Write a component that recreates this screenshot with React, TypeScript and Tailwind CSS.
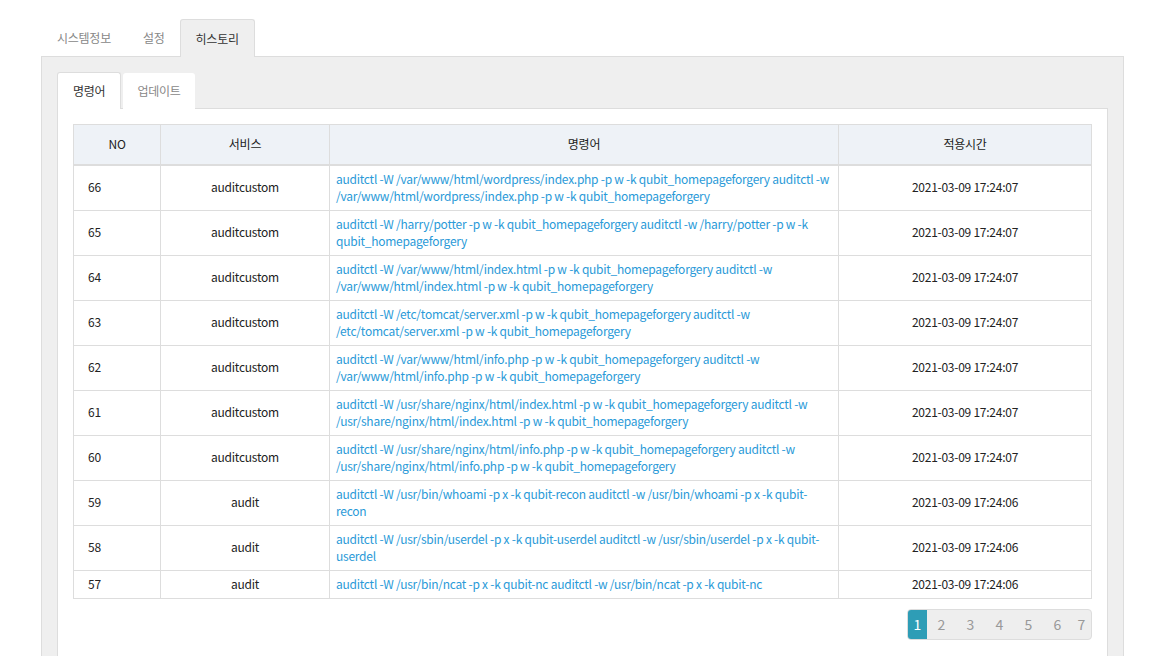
import React from 'react';

interface HistoryRow {
  no: number;
  service: string;
  command: string;
  time: string;
}

const rows: HistoryRow[] = [
  { no: 66, service: 'auditcustom', command: 'auditctl -W /var/www/html/wordpress/index.php -p w -k qubit_homepageforgery auditctl -w /var/www/html/wordpress/index.php -p w -k qubit_homepageforgery', time: '2021-03-09 17:24:07' },
  { no: 65, service: 'auditcustom', command: 'auditctl -W /harry/potter -p w -k qubit_homepageforgery auditctl -w /harry/potter -p w -k qubit_homepageforgery', time: '2021-03-09 17:24:07' },
  { no: 64, service: 'auditcustom', command: 'auditctl -W /var/www/html/index.html -p w -k qubit_homepageforgery auditctl -w /var/www/html/index.html -p w -k qubit_homepageforgery', time: '2021-03-09 17:24:07' },
  { no: 63, service: 'auditcustom', command: 'auditctl -W /etc/tomcat/server.xml -p w -k qubit_homepageforgery auditctl -w /etc/tomcat/server.xml -p w -k qubit_homepageforgery', time: '2021-03-09 17:24:07' },
  { no: 62, service: 'auditcustom', command: 'auditctl -W /var/www/html/info.php -p w -k qubit_homepageforgery auditctl -w /var/www/html/info.php -p w -k qubit_homepageforgery', time: '2021-03-09 17:24:07' },
  { no: 61, service: 'auditcustom', command: 'auditctl -W /usr/share/nginx/html/index.html -p w -k qubit_homepageforgery auditctl -w /usr/share/nginx/html/index.html -p w -k qubit_homepageforgery', time: '2021-03-09 17:24:07' },
  { no: 60, service: 'auditcustom', command: 'auditctl -W /usr/share/nginx/html/info.php -p w -k qubit_homepageforgery auditctl -w /usr/share/nginx/html/info.php -p w -k qubit_homepageforgery', time: '2021-03-09 17:24:07' },
  { no: 59, service: 'audit', command: 'auditctl -W /usr/bin/whoami -p x -k qubit-recon auditctl -w /usr/bin/whoami -p x -k qubit-recon', time: '2021-03-09 17:24:06' },
  { no: 58, service: 'audit', command: 'auditctl -W /usr/sbin/userdel -p x -k qubit-userdel auditctl -w /usr/sbin/userdel -p x -k qubit-userdel', time: '2021-03-09 17:24:06' },
  { no: 57, service: 'audit', command: 'auditctl -W /usr/bin/ncat -p x -k qubit-nc auditctl -w /usr/bin/ncat -p x -k qubit-nc', time: '2021-03-09 17:24:06' },
];

const pages = [1, 2, 3, 4, 5, 6, 7];

export default function App() {
  return (
    <div
      className="min-h-[656px] bg-white pl-[41px] pr-[42px] pt-[19px] text-[12px] tracking-[-0.25px] text-[#222]"
      style={{ fontFamily: '"Noto Sans CJK KR", "Noto Sans", sans-serif' }}
    >
      {/* top tabs */}
      <div className="flex h-[38px] items-stretch">
        <div className="flex items-center border border-transparent px-[15px] text-[#888]">시스템정보</div>
        <div className="flex items-center border border-transparent pl-[15px] pr-[14px] text-[#888]">설정</div>
        <div className="relative z-10 flex items-center rounded-t-[3px] border border-b-0 border-[#ddd] bg-[#efefef] px-[15px] text-[#333]">
          히스토리
        </div>
      </div>

      <div className="-mt-px min-h-[600px] border border-[#ddd] bg-[#efefef] px-[15px] pt-[15px]">
        {/* inner tabs */}
        <div className="flex h-[37px] items-stretch">
          <div className="relative z-10 flex items-center rounded-t-[3px] border border-b-0 border-[#ddd] bg-white px-[15px] text-[#333]">
            명령어
          </div>
          <div className="ml-[2px] mt-px flex items-center rounded-t-[3px] bg-white px-[14px] text-[#888]">업데이트</div>
        </div>

        <div className="-mt-px min-h-[560px] border border-[#ddd] bg-white p-[15px]">
          <table className="w-full border-collapse leading-[17px]">
            <thead>
              <tr className="h-[40px] bg-[#eef2f7]">
                <th className="w-[87px] border border-b-2 border-[#ddd] pb-px font-normal">NO</th>
                <th className="w-[169px] border border-b-2 border-[#ddd] pb-px font-normal">서비스</th>
                <th className="w-[509px] border border-b-2 border-[#ddd] pb-px font-normal">명령어</th>
                <th className="border border-b-2 border-[#ddd] pb-px font-normal">적용시간</th>
              </tr>
            </thead>
            <tbody>
              {rows.map((row) => (
                <tr key={row.no}>
                  <td className="border border-[#ddd] pb-[6px] pl-[14px] pt-[4px]">{row.no}</td>
                  <td className="border border-[#ddd] pb-[6px] pt-[4px] text-center">{row.service}</td>
                  <td className="border border-[#ddd] pb-[6px] pl-[6px] pr-[4px] pt-[4px] text-[#2a9ad8]">{row.command}</td>
                  <td className="border border-[#ddd] pb-[6px] pt-[4px] text-center">{row.time}</td>
                </tr>
              ))}
            </tbody>
          </table>

          <div className="mt-[10px] flex justify-end">
            <div className="flex h-[31px] overflow-hidden rounded-[4px] border border-[#ddd] bg-[#eee] text-[14px] tracking-normal">
              {pages.map((p) => (
                <div
                  key={p}
                  className={
                    p === 1
                      ? 'flex w-[19px] items-center justify-center bg-[#2e9db6] text-white'
                      : p === 7
                        ? 'flex w-[19px] items-center justify-center text-[#999]'
                        : 'flex w-[29px] items-center justify-center text-[#999]'
                  }
                >
                  {p}
                </div>
              ))}
            </div>
          </div>
        </div>
      </div>
    </div>
  );
}
